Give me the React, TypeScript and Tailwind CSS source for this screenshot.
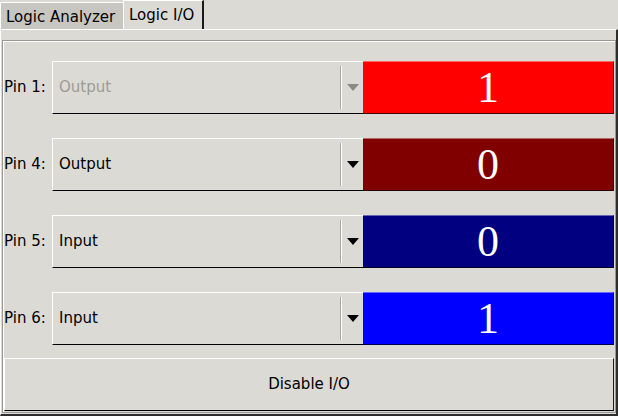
import React from "react";

interface Pin {
  name: string;
  mode: string;
  value: 0 | 1;
  enabled: boolean;
  color: string;
}

const pins: Pin[] = [
  { name: "Pin 1:", mode: "Output", value: 1, enabled: false, color: "bg-[#ff0000]" },
  { name: "Pin 4:", mode: "Output", value: 0, enabled: true, color: "bg-[#800000]" },
  { name: "Pin 5:", mode: "Input", value: 0, enabled: true, color: "bg-[#000080]" },
  { name: "Pin 6:", mode: "Input", value: 1, enabled: true, color: "bg-[#0000ff]" },
];

function Combo({ mode, enabled }: { mode: string; enabled: boolean }) {
  return (
    <div className="flex h-full items-center border-t border-l border-b border-t-white border-l-white border-b-black bg-[#dcdad5]">
      <span className={`flex-1 pl-[6px] ${enabled ? "text-black" : "text-[#9d9b97]"}`}>{mode}</span>
      <div className="h-[43px] w-[2px] border-l border-[#a9a7a2] bg-white" />
      <div className="flex w-[21px] justify-center">
        <svg width="12" height="7" viewBox="0 0 12 7">
          <polygon points="0,0 12,0 6,7" fill={enabled ? "#000000" : "#8c8a86"} />
        </svg>
      </div>
    </div>
  );
}

export default function App() {
  return (
    <div className="h-[416px] w-[618px] overflow-hidden bg-[#dcdad5] font-['DejaVu_Sans',sans-serif] text-[15px] text-black">
      {/* Tabs */}
      <div className="flex h-[29px] items-end">
        <div className="flex h-[27px] w-[123px] items-center border-t border-l border-white bg-[#c8c6c1] pl-[5px] pt-[2px]">
          Logic Analyzer
        </div>
        <div className="flex h-[29px] w-[81px] items-center border-t border-l border-white border-r-2 border-r-[#1a1a1a] pl-[5px] pt-[1px]">
          Logic I/O
        </div>
      </div>

      {/* Page */}
      <div className="h-[387px] border-t border-l border-white border-r-2 border-b-2 border-r-[#2e2e2e] border-b-[#2e2e2e] pl-[1px] pt-[10px] pb-[1px]">
        <div className="h-[373px] w-[614px] border border-[#9a9893] px-[1px] pt-[20px] pb-[1px] shadow-[inset_1px_1px_0_#ffffff]">
          <div className="flex flex-col gap-[24px]">
            {pins.map((p) => (
              <div key={p.name} className="grid h-[53px] grid-cols-[48px_311px_251px] items-center">
                <span className="whitespace-nowrap">{p.name}</span>
                <Combo mode={p.mode} enabled={p.enabled} />
                <div
                  className={`flex h-full items-center justify-center border-t border-t-white/40 border-r border-b border-r-black/60 border-b-black/70 font-['Liberation_Serif',serif] text-[44px] leading-none text-white ${p.color}`}
                >
                  {p.value}
                </div>
              </div>
            ))}
          </div>
          <button className="mt-[13px] flex h-[53px] w-[610px] items-center justify-center border-t border-l border-white border-r border-b border-r-[#1c1c1c] border-b-black bg-[#dcdad5] text-[15px]">
            Disable I/O
          </button>
        </div>
      </div>
    </div>
  );
}
